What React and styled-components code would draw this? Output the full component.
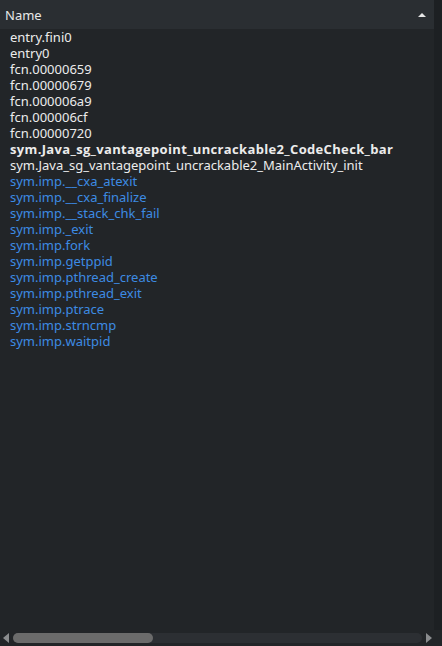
import React from "react"
import styled, { createGlobalStyle } from "styled-components"

const GlobalStyle = createGlobalStyle`
  html, body {
    margin: 0;
    padding: 0;
    background: #222528;
  }
  body {
    font-family: "Noto Sans", "DejaVu Sans", sans-serif;
  }
`

const Panel = styled.div`
  width: 442px;
  height: 646px;
  display: flex;
  flex-direction: column;
  background: #222528;
  overflow: hidden;
`

const Body = styled.div`
  flex: 1;
  display: flex;
  min-height: 0;
`

const Main = styled.div`
  flex: 1;
  display: flex;
  flex-direction: column;
`

const SideStrip = styled.div`
  width: 8px;
  background: #1d2023;
`

const Header = styled.div`
  height: 29px;
  display: flex;
  align-items: center;
  justify-content: space-between;
  padding: 0 8px 0 5px;
  background: #2a2e32;
  color: #e8e8e8;
  font-size: 13px;
`

const SortArrow = styled.span`
  width: 0;
  height: 0;
  border-left: 4px solid transparent;
  border-right: 4px solid transparent;
  border-bottom: 4px solid #e6e6e6;
  margin-top: 1px;
`

const List = styled.ul`
  list-style: none;
  margin: 0;
  padding: 0;
  flex: 1;
`

const Row = styled.li`
  height: 16px;
  line-height: 16px;
  padding-left: 10px;
  font-size: 13px;
  white-space: nowrap;
  color: ${(p) => (p.$imp ? "#3d8be3" : "#ececec")};
  font-weight: ${(p) => (p.$bold ? 700 : 400)};
  font-family: ${(p) =>
    p.$bold ? '"Open Sans", "Noto Sans", sans-serif' : "inherit"};
  letter-spacing: ${(p) => (p.$bold ? "0.34px" : "0")};
`

const HScroll = styled.div`
  height: 16px;
  display: flex;
  align-items: center;
  gap: 4px;
  padding: 0 10px 0 3px;
  background: #222528;
`

const Arrow = styled.span`
  width: 0;
  height: 0;
  border-top: 5px solid transparent;
  border-bottom: 5px solid transparent;
  ${(p) =>
    p.$dir === "left"
      ? "border-right: 6px solid #8a8c8e;"
      : "border-left: 6px solid #8a8c8e;"}
`

const Track = styled.div`
  flex: 1;
  height: 10px;
  border-radius: 5px;
  background: #2c2f33;
  display: flex;
`

const Thumb = styled.div`
  height: 10px;
  border-radius: 5px;
  background: #6b6b6b;
`

const items = [
  ["entry.fini0"],
  ["entry0"],
  ["fcn.00000659"],
  ["fcn.00000679"],
  ["fcn.000006a9"],
  ["fcn.000006cf"],
  ["fcn.00000720"],
  ["sym.Java_sg_vantagepoint_uncrackable2_CodeCheck_bar", "bold"],
  ["sym.Java_sg_vantagepoint_uncrackable2_MainActivity_init"],
  ["sym.imp.__cxa_atexit", "imp"],
  ["sym.imp.__cxa_finalize", "imp"],
  ["sym.imp.__stack_chk_fail", "imp"],
  ["sym.imp._exit", "imp"],
  ["sym.imp.fork", "imp"],
  ["sym.imp.getppid", "imp"],
  ["sym.imp.pthread_create", "imp"],
  ["sym.imp.pthread_exit", "imp"],
  ["sym.imp.ptrace", "imp"],
  ["sym.imp.strncmp", "imp"],
  ["sym.imp.waitpid", "imp"],
]

export default function App() {
  return (
    <>
      <GlobalStyle />
      <Panel>
        <Body>
          <Main>
            <Header>
              <span>Name</span>
              <SortArrow />
            </Header>
            <List>
              {items.map(([name, kind]) => (
                <Row key={name} $imp={kind === "imp"} $bold={kind === "bold"}>
                  {name}
                </Row>
              ))}
            </List>
          </Main>
          <SideStrip />
        </Body>
        <HScroll>
          <Arrow $dir="left" />
          <Track>
            <Thumb style={{ width: `${(139 / 405) * 100}%` }} />
          </Track>
          <Arrow $dir="right" />
        </HScroll>
      </Panel>
    </>
  )
}
